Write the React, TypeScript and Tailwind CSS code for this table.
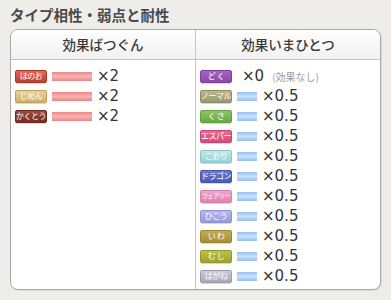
type TypeKey =
  | 'fire' | 'ground' | 'fighting' | 'poison' | 'normal' | 'grass' | 'psychic'
  | 'ice' | 'dragon' | 'fairy' | 'flying' | 'rock' | 'bug' | 'steel'

// Badge label + gradient per type; long labels get a smaller size
const TYPES: Record<TypeKey, { label: string; className: string; small?: boolean }> = {
  fire: { label: 'ほのお', className: 'bg-gradient-to-b from-[#dd6a50] to-[#b9402e] border-[#a83a2a]' },
  ground: { label: 'じめん', className: 'bg-gradient-to-b from-[#e8d39a] to-[#cfb06a] border-[#bfa060]' },
  fighting: { label: 'かくとう', className: 'bg-gradient-to-b from-[#9a4a38] to-[#7a2e22] border-[#6e2a20]' },
  poison: { label: 'ど く', className: 'bg-gradient-to-b from-[#a964c0] to-[#8c48a8] border-[#7e40a0]' },
  normal: { label: 'ノーマル', className: 'bg-gradient-to-b from-[#b8b68c] to-[#9c9a70] border-[#8e8c66]' },
  grass: { label: 'く さ', className: 'bg-gradient-to-b from-[#8cc466] to-[#6ca846] border-[#62a040]' },
  psychic: { label: 'エスパー', className: 'bg-gradient-to-b from-[#ea6a94] to-[#d44c7a] border-[#c84674]' },
  ice: { label: 'こおり', className: 'bg-gradient-to-b from-[#c0e8e8] to-[#98d2d4] border-[#8cc6c8]' },
  dragon: { label: 'ドラゴン', className: 'bg-gradient-to-b from-[#6a78cc] to-[#4c5cb4] border-[#4656a8]' },
  fairy: { label: 'フェアリー', className: 'bg-gradient-to-b from-[#f0a6cc] to-[#e084b4] border-[#d67eac]', small: true },
  flying: { label: 'ひこう', className: 'bg-gradient-to-b from-[#b8b8ee] to-[#9a9ad8] border-[#9090d0]' },
  rock: { label: 'い わ', className: 'bg-gradient-to-b from-[#c4ac54] to-[#a88e36] border-[#9c8432]' },
  bug: { label: 'む し', className: 'bg-gradient-to-b from-[#bcc046] to-[#a0a42c] border-[#96992a]' },
  steel: { label: 'はがね', className: 'bg-gradient-to-b from-[#ccccd8] to-[#a8a8bc] border-[#9c9cb0]' },
}

const jp = "font-['Noto_Sans_CJK_JP','DejaVu_Sans',sans-serif]"
const num = "font-['DejaVu_Sans',sans-serif]"

function TypeBadge({ type }: { type: TypeKey }) {
  const t = TYPES[type]
  return (
    <span
      className={`flex h-[13px] w-[32px] shrink-0 items-center justify-center overflow-hidden whitespace-nowrap rounded-[2px] border leading-none tracking-[-0.06em] text-white shadow-[0_1px_0_rgba(0,0,0,0.15)] ${t.small ? 'text-[6px]' : 'text-[8px]'} ${jp} ${t.className}`}
    >
      {t.label}
    </span>
  )
}

function Bar({ kind }: { kind: 'weak' | 'resist' }) {
  return kind === 'weak' ? (
    <span className="h-[9px] w-[40px] shrink-0 bg-gradient-to-b from-[#ee8484] via-[#f8b4b4] to-[#ee8484]" />
  ) : (
    <span className="h-[9px] w-[20px] shrink-0 bg-gradient-to-b from-[#94c0ee] via-[#c8e0fa] to-[#94c0ee]" />
  )
}

function Row({ type, kind, rate, note }: { type: TypeKey; kind?: 'weak' | 'resist'; rate: string; note?: string }) {
  return (
    <div className="flex h-[20px] items-center gap-[5px]">
      <TypeBadge type={type} />
      {kind && <Bar kind={kind} />}
      <span className={`${num} text-[15px] leading-none text-[#333] ${kind ? '' : 'ml-[5px]'}`}>×{rate}</span>
      {note && <span className={`${jp} ml-[3px] text-[10px] text-[#999]`}>{note}</span>}
    </div>
  )
}

const weak: TypeKey[] = ['fire', 'ground', 'fighting']
const resist: TypeKey[] = ['normal', 'grass', 'psychic', 'ice', 'dragon', 'fairy', 'flying', 'rock', 'bug', 'steel']

export default function App() {
  return (
    <div className="h-[300px] w-[391px] bg-[#efedea] px-[10px] pt-[5px]">
      <h2 className={`${jp} text-[14.5px] font-bold leading-[20px] text-[#4a4a4a]`}>タイプ相性・弱点と耐性</h2>
      <div className="mt-[4px] overflow-hidden rounded-[8px] border border-[#a8a8a8] bg-white shadow-[1px_1px_1px_rgba(0,0,0,0.08)]">
        {/* Header */}
        <div className="grid h-[30px] grid-cols-[185px_1fr] border-b border-[#c4c4c4] bg-gradient-to-b from-white to-[#f1f1f1]">
          <div className={`${jp} flex items-center justify-center border-r border-[#c4c4c4] text-[13.5px] font-medium text-[#3a3a3a]`}>効果ばつぐん</div>
          <div className={`${jp} flex items-center justify-center text-[13.5px] font-medium text-[#3a3a3a]`}>効果いまひとつ</div>
        </div>
        {/* Body */}
        <div className="grid grid-cols-[185px_1fr]">
          <div className="flex flex-col border-r border-[#c4c4c4] px-[4px] pt-[6px]">
            {weak.map((t) => (
              <Row key={t} type={t} kind="weak" rate="2" />
            ))}
          </div>
          <div className="flex h-[229px] flex-col px-[4px] pt-[6px]">
            <Row type="poison" rate="0" note="(効果なし)" />
            {resist.map((t) => (
              <Row key={t} type={t} kind="resist" rate="0.5" />
            ))}
          </div>
        </div>
      </div>
    </div>
  )
}
